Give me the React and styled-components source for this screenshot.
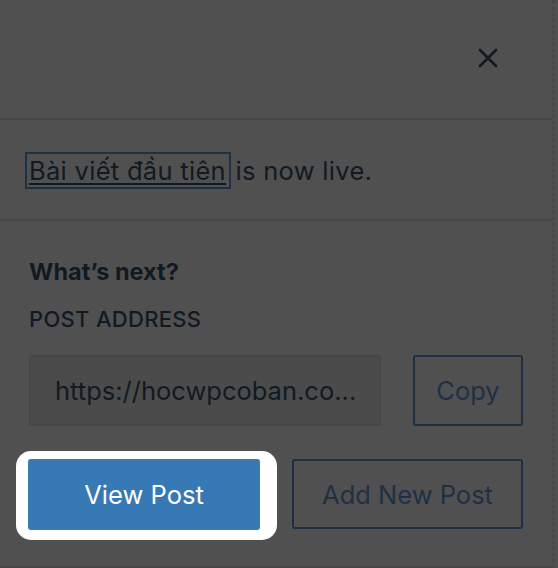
import React from "react";
import styled, { createGlobalStyle } from "styled-components";

const Global = createGlobalStyle`
  html, body { margin: 0; padding: 0; background: #505050; }
  body { font-family: Inter, "Noto Sans", "Liberation Sans", sans-serif; color: #111a23; }
  * { box-sizing: border-box; }
`;

const Panel = styled.div`
  width: 555px;
  height: 568px;
  background: #505050;
  border-right: 3px dotted #474747;
  display: flex;
  flex-direction: column;
`;

const Header = styled.div`
  height: 120px;
  flex-shrink: 0;
  border-bottom: 2px solid #474747;
  display: flex;
  justify-content: flex-end;
  padding: 46px 52px 0 0;
`;

const CloseButton = styled.button`
  width: 24px;
  height: 24px;
  padding: 0;
  border: none;
  background: none;
  display: flex;
  align-items: center;
  justify-content: center;
`;

const Notice = styled.div`
  height: 101px;
  flex-shrink: 0;
  border-bottom: 2px solid #474747;
  padding: 35px 0 0 29px;
  font-size: 25.5px;
  letter-spacing: 0.3px;
  line-height: 32px;
`;

const Link = styled.a`
  color: #111a23;
  text-decoration: underline;
  text-underline-offset: 3px;
  text-decoration-thickness: 1.5px;
  outline: 2px solid #1d3247;
  outline-offset: 1px;
  padding: 0 2px 0 1px;
  margin-left: -1px;
`;

const Next = styled.div`
  flex: 1;
  border-bottom: 2px solid #474747;
  padding: 35px 0 0 29px;
  display: flex;
  flex-direction: column;
`;

const Heading = styled.h2`
  margin: 0;
  font-size: 23.5px;
  font-weight: 700;
  line-height: 32px;
`;

const Label = styled.div`
  margin-top: 18px;
  font-size: 22px;
  font-weight: 500;
  letter-spacing: 0.3px;
  text-transform: uppercase;
  line-height: 26px;
`;

const Row = styled.div`
  display: flex;
  gap: ${(p) => p.$gap}px;
  margin-top: ${(p) => p.$top}px;
`;

const Field = styled.div`
  flex-shrink: 0;
  width: 352px;
  height: 71px;
  border: 2px solid #474747;
  border-radius: 3px;
  background: #4b4b4b;
  display: flex;
  align-items: center;
  padding: 0 24px;
  font-size: 25.5px;
  color: #111a23;
  white-space: nowrap;
  overflow: hidden;
`;

const OutlineButton = styled.button`
  flex-shrink: 0;
  width: ${(p) => p.$w}px;
  height: ${(p) => p.$h}px;
  border: 2px solid #1d2f42;
  border-radius: 3px;
  background: transparent;
  font-family: inherit;
  font-size: 25.5px;
  color: #1e3046;
  padding: 0;
`;

const Highlight = styled.div`
  position: relative;
  flex-shrink: 0;
  margin-left: -1px;
  &::before {
    content: "";
    position: absolute;
    left: -12px;
    right: -17px;
    top: -8px;
    bottom: -10px;
    background: #ffffff;
    border-radius: 15px;
  }
`;

const PrimaryButton = styled.button`
  position: relative;
  width: 232px;
  height: 71px;
  border: none;
  border-radius: 3px;
  background: #3679b5;
  color: #ffffff;
  font-family: inherit;
  font-size: 25.5px;
  padding: 0;
`;

export default function App() {
  return (
    <>
      <Global />
      <Panel>
        <Header>
          <CloseButton aria-label="Close">
            <svg width="20" height="20" viewBox="0 0 20 20">
              <path d="M2 2 L18 18 M18 2 L2 18" stroke="#111a23" strokeWidth="2.6" strokeLinecap="round" fill="none" />
            </svg>
          </CloseButton>
        </Header>
        <Notice>
          <Link href="#">Bài viết đầu tiên</Link> is now live.
        </Notice>
        <Next>
          <Heading>What’s next?</Heading>
          <Label>Post address</Label>
          <Row $gap={32} $top={23}>
            <Field>https://hocwpcoban.co...</Field>
            <OutlineButton $w={110} $h={71}>Copy</OutlineButton>
          </Row>
          <Row $gap={32} $top={33}>
            <Highlight>
              <PrimaryButton>View Post</PrimaryButton>
            </Highlight>
            <OutlineButton $w={231} $h={70}>Add New Post</OutlineButton>
          </Row>
        </Next>
      </Panel>
    </>
  );
}
